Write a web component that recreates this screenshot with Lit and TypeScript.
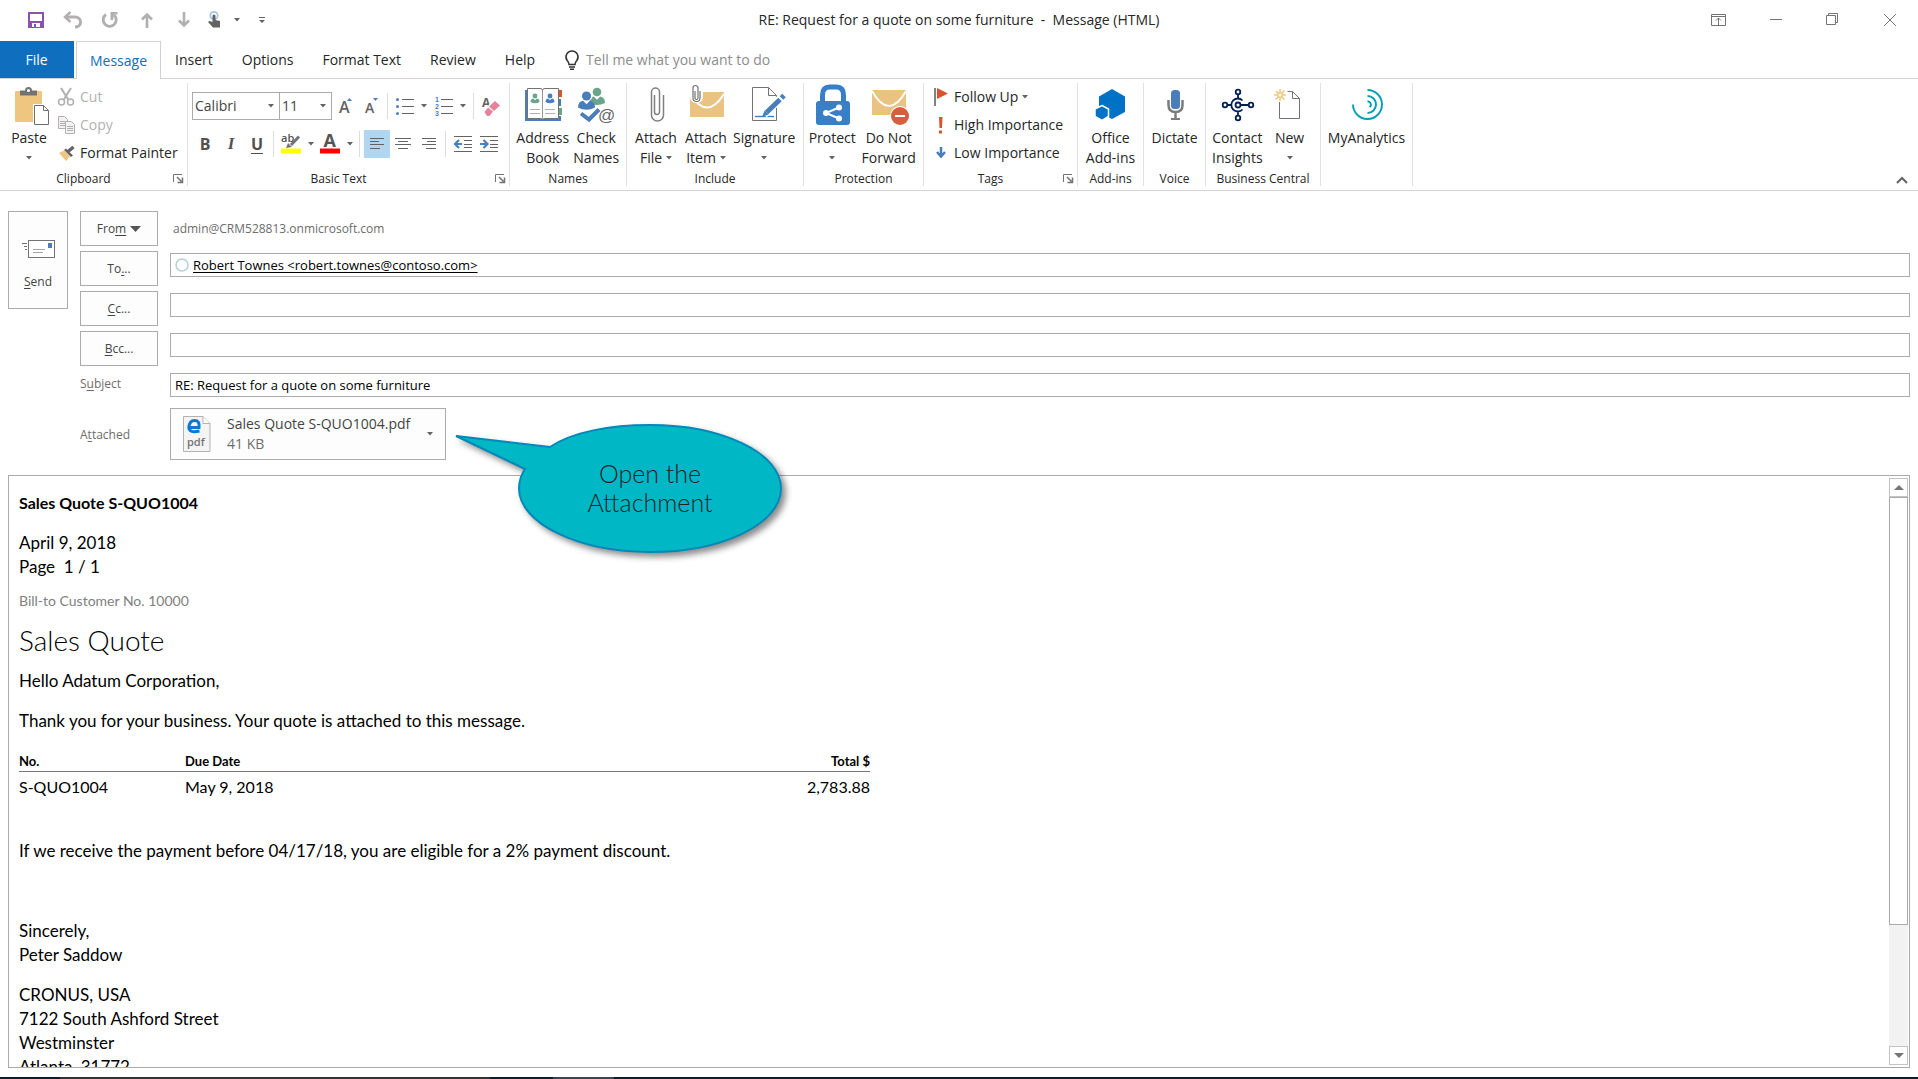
import { LitElement, html, svg, css, nothing, TemplateResult, SVGTemplateResult } from "lit";
import { customElement } from "lit/decorators.js";
import { classMap } from "lit/directives/class-map.js";

type Art = SVGTemplateResult;

const person = (x: number, y: number, w: number, color: string): Art => svg`
  <g fill=${color}>
    <circle cx=${x} cy=${y} r=${w * 0.27}/>
    <path d="M${x - w / 2} ${y + w * 0.68}q0 ${-w * 0.36} ${w * 0.3} ${-w * 0.4}l${w * 0.2} ${w * 0.2}l${w * 0.2} ${-w * 0.2}q${w * 0.3} ${w * 0.04} ${w * 0.3} ${w * 0.4}q${-w / 2} ${w * 0.26} ${-w} 0z"/>
  </g>`;

/* Large ribbon icons, drawn on a 40 x 44 canvas. */
const big: Record<string, Art> = {
  paste: svg`
    <rect x="6" y="8" width="27" height="31" rx="1" fill="#eec680"/>
    <path d="M11 12.500V7.500H16a3.500 3.500 0 0 1 7 0H28v5z" fill="#737373"/>
    <circle cx="19.500" cy="7.500" r="1.500" fill="#fff"/>
    <path d="M24 21h12l5 6v16H24z" fill="#fff"/>
    <path d="M25.500 22.500h9l5 5v14h-14zM34.500 22.500v5h5" fill="#fff" stroke="#6d6d6d"/>`,
  book: svg`
    <rect x="2" y="7" width="36" height="31" fill="#4a7ebb"/>
    <path d="M36 7h3v7h-3z" fill="#d9532c"/><path d="M36 14h3v2h-3zM36 23h3v2h-3zM36 32h3v1h-3z" fill="#fff"/>
    <path d="M36 25h3v7h-3z" fill="#69a58b"/>
    <path d="M4.500 5.500H17q2.500 0 2.500 1.500Q19.500 5.500 22 5.500h13.500V35.500H22q-2.500 0-2.500 1.500q0-1.500-2.500-1.500H4.500z" fill="#fff" stroke="#737373"/>
    <path d="M19.500 7v29" stroke="#999"/>
    ${person(12, 13, 9, "#69a58b")}${person(27, 13, 9, "#4a7ebb")}
    <path d="M7 26.500h10M7 30.500h10M22 26.500h10M22 30.500h10" stroke="#b0b0b0"/>`,
  names: svg`
    ${person(21, 9, 16, "#69a58b")}
    <circle cx="10.500" cy="12.500" r="6" fill="#fff"/><path d="M1 27q1-10 9-10t10 10z" fill="#fff"/>
    ${person(10.5, 13, 17, "#4a7ebb")}
    <path d="M5 30.500l8 6L23 26.500" fill="none" stroke="#fff" stroke-width="7"/>
    <path d="M5 30.500l8 6L23 26.500" fill="none" stroke="#4a7ebb" stroke-width="4"/>
    <text x="22" y="38" font-family="Liberation Sans, sans-serif" font-size="17" fill="#666">@</text>`,
  clip: svg`<path d="M18.500 12V29a2.500 2.500 0 0 0 5 0V9a4 4 0 0 0-8 0V32a6 6 0 0 0 12 0V12" fill="none" stroke="#808080" stroke-width="1.500"/>`,
  item: svg`
    <rect x="4" y="9" width="34" height="25" fill="#eac282"/>
    <path d="M4 11Q21 38 38 11" fill="none" stroke="#fff" stroke-width="2"/>
    <path d="M4 8h13v5q0 7-6.500 7T4 13z" fill="#fff"/>
    <path d="M9 8v7a1.500 1.500 0 0 0 3 0V5a2.500 2.500 0 0 0-5 0V15a3.500 3.500 0 0 0 7 0V8" fill="none" stroke="#737373" stroke-width="1.200"/>`,
  sign: svg`
    <path d="M8.500 4.500H24.500l8 8V37.500H8.500zM24.500 4.500v8h8" fill="#fff" stroke="#737373"/>
    <path d="M11 33.500H30" stroke="#4a7ebb" stroke-width="1.400"/>
    <path d="M20 31.500L40 12" stroke="#fff" stroke-width="8"/>
    <path d="M22.500 29.500L36 16.500M37.500 15l2.500-2.500" stroke="#4a7ebb" stroke-width="5"/>
    <path d="M18 34l2.500-6.500 4 4z" fill="#4a7ebb"/>`,
  lock: svg`
    <path d="M10.500 20V12q0-8 7-8h7q7 0 7 8v8" fill="none" stroke="#387fc8" stroke-width="5"/>
    <rect x="4" y="18" width="34" height="24" rx="3" fill="#387fc8"/>
    <path d="M27 24.500L14 30l13 5.500" fill="none" stroke="#fff" stroke-width="2"/>
    <g fill="#fff"><circle cx="14" cy="30" r="3"/><circle cx="27" cy="24.500" r="3"/><circle cx="27" cy="35.500" r="3"/></g>`,
  noforward: svg`
    <rect x="3" y="7" width="34" height="25" fill="#eac282"/>
    <path d="M3 8Q20 38 37 8" fill="none" stroke="#fff" stroke-width="2"/>
    <circle cx="31" cy="33" r="10" fill="#fff"/><circle cx="31" cy="33" r="9" fill="#d75f41"/>
    <rect x="26" y="32" width="10" height="2" fill="#fff"/>`,
  addins: svg`
    <path d="M21 6l13 7.500V29l-13 7L8 29V13.500z" fill="#0072c6"/>
    <path d="M11 22.500l6.500 3.500v7.500L11 37.500 4 33.500V26z" fill="#0072c6" stroke="#fff" stroke-width="1.500"/>`,
  mic: svg`
    <rect x="16" y="7" width="9" height="19" rx="3.500" fill="#4a7ebb"/>
    <path d="M13.500 17v5q0 7 7 7t7-7v-5M20.500 29v7" fill="none" stroke="#7b7b7b" stroke-width="2.500"/>
    <rect x="16" y="35" width="9" height="2" fill="#7b7b7b"/>`,
  insights: svg`
    <g fill="none" stroke="#002050" stroke-width="1.800">
      <circle cx="21" cy="22" r="2.500"/><circle cx="8" cy="22" r="2.300"/><circle cx="34" cy="22" r="2.300"/>
      <circle cx="21" cy="9" r="2.300"/><circle cx="21" cy="35" r="2.300"/>
      <path d="M25.500 17.500a6.500 6.500 0 1 0 0 9M10 22h4.500M23.500 22H32M21 11v4.500M21 28.500V33"/>
    </g>`,
  fresh: svg`
    <path d="M17.500 8.500H22.500l7 7V35.500H9.500V19M22.500 8.500v7h7" fill="none" stroke="#737373"/>
    <g fill="none" stroke="#eec680" stroke-width="2"><circle cx="10" cy="12" r="2.300" stroke-width="1.500"/>
    <path d="M10 6v3.500M10 14.500V18M4 12h3.500M12.500 12H16M6 8l2 2M12 14l2.500 2.500M14.500 7.500l-2.500 2.500M8 14l-2.500 2.500" stroke-width="1.500"/></g>`,
  analytics: svg`
    <g fill="none" stroke="#00a0b4" stroke-width="1.900">
      <path d="M6 21.500a14.500 14.500 0 1 0 14.500-14.500"/><path d="M20.500 13a8.500 8.500 0 0 1 0 17"/><path d="M20.500 18.500a3 3 0 0 1 2 5.500"/>
    </g>`,
};

/* Small icons, each with its own canvas size. */
const small: Record<string, [number, number, Art]> = {
  save: [16, 16, svg`<path d="M0 0h16v16H0z" fill="#8a52ad"/><path d="M2 2h12v7H2z" fill="#fff"/><path d="M4 11h8v4H4z" fill="#fff"/><path d="M6 12h2v3H6z" fill="#8a52ad"/>`],
  undo: [20, 16, svg`<path d="M3 5h9a5 4.500 0 0 1 0 10" fill="none" stroke="#b1afb0" stroke-width="3"/><path d="M7.500 0L2 5l5.500 5" fill="none" stroke="#b1afb0" stroke-width="2.500"/>`],
  redo: [18, 16, svg`<path d="M5 2.500A6.500 6.500 0 1 0 13 3" fill="none" stroke="#b1afb0" stroke-width="2.800"/><path d="M9.500 0h7v2.500h-3.500L12 8H9.500z" fill="#b1afb0"/>`],
  up: [12, 16, svg`<path d="M6 16V2M1 7.500l5-5 5 5" fill="none" stroke="#b1afb0" stroke-width="2.600"/>`],
  down: [12, 16, svg`<path d="M6 0v14M1 8.500l5 5 5-5" fill="none" stroke="#b1afb0" stroke-width="2.600"/>`],
  touch: [14, 17, svg`<circle cx="6" cy="4.500" r="3.700" fill="none" stroke="#a5c6e4" stroke-width="1.800"/><path d="M4.500 4.500q1.500-2 3 0V9l4.500 1v6.500H5L0 11l1.500-1 3 1z" fill="#636363"/>`],
  caret: [6, 4, svg`<path d="M0 0h6L3 3.500z" fill="#636363"/>`],
  more: [6, 6, svg`<path d="M0 0h6v1H0zM0 3h6L3 6z" fill="#636363"/>`],
  pin: [16, 14, svg`<path d="M.5 1.500h14v11H.5zM.5 3.500h14M7.500 12V5M5 7.500L7.500 5 10 7.500" fill="none" stroke="#737373"/>`],
  min: [12, 12, svg`<path d="M0 5.500h12" stroke="#737373"/>`],
  restore: [13, 13, svg`<path d="M.5 2.500h9v9h-9zM2.500 2.500v-2h9v9h-2" fill="none" stroke="#737373"/>`],
  close: [12, 12, svg`<path d="M0 0l12 12M12 0L0 12" stroke="#737373"/>`],
  bulb: [16, 20, svg`<path d="M5 14.500q0-2-1.800-4A6 6 0 0 1 8 .9a6 6 0 0 1 4.800 9.600Q11 12.500 11 14.500z" fill="none" stroke="#333" stroke-width="1.500"/><path d="M5 17h6M6 19.200h4" stroke="#333" stroke-width="1.500"/>`],
  cut: [16, 18, svg`<g fill="none" stroke="#b1afb0"><path d="M3 0l7.500 12M13 0L5.500 12" stroke-width="2"/><circle cx="3.500" cy="14" r="3" stroke-width="1.500"/><circle cx="12.500" cy="14" r="3" stroke-width="1.500"/></g>`],
  copy: [17, 18, svg`<g fill="#f5f2f5" stroke="#b1afb0"><path d="M.5.500h6l3 3v9h-9z"/><path d="M2 5.500h5M2 7.500h5M2 9.500h5"/><path d="M7.500 5.500h6l3 3v9h-9z"/><path d="M9 10.500h6M9 12.500h6M9 14.500h6"/></g>`],
  brush: [17, 15, svg`<path d="M1 7l5-2.500 6 6L8 15z" fill="#eec680"/><path d="M6 4l2-1.500 7 7-2 1.500z" fill="#636363"/><path d="M10 5.500L15.500 1" stroke="#636363" stroke-width="3.500"/>`],
  bullets: [18, 17, svg`<g fill="#4a7ebb"><circle cx="1.500" cy="1.500" r="1.500"/><circle cx="1.500" cy="8.500" r="1.500"/><circle cx="1.500" cy="15.500" r="1.500"/></g><path d="M6 1.500h12M6 8.500h12M6 15.500h12" stroke="#636363"/>`],
  numbers: [18, 19, svg`<g font-family="Liberation Sans, sans-serif" font-weight="700" font-size="7" fill="#4a7ebb"><text x="0" y="5">1</text><text x="0" y="12">2</text><text x="0" y="19">3</text></g><path d="M6 2.500h12M6 9.500h12M6 16.500h12" stroke="#636363"/>`],
  eraser: [18, 19, svg`<text x="0" y="10" font-family="Open Sans, sans-serif" font-weight="700" font-size="12" fill="#636363">A</text><path d="M1.500 13.500l9-9.500 8 6-8 9.500H5z" fill="#fff"/><path d="M7 9.500l6-5.500 5 4.500-6 5.500z" fill="#e6829a"/><path d="M6 10.500l5 4-3.500 4.500H5L2.500 15z" fill="#e6829a"/>`],
  mark: [20, 20, svg`<text x="0" y="8" font-family="Open Sans, sans-serif" font-weight="600" font-size="11" fill="#555">ab</text><path d="M18 2.500L10 11" stroke="#737373" stroke-width="3"/><path d="M5 14l2-5 4 4z" fill="#737373"/><path d="M0 14.500h20v5H0z" fill="#ff0"/>`],
  tint: [20, 20, svg`<text x="3.500" y="13" font-family="Open Sans, sans-serif" font-weight="700" font-size="18" fill="#555">A</text><path d="M0 14.500h20v5H0z" fill="red"/>`],
  left: [14, 12, svg`<path d="M0 .5h14M0 3.500h9M0 6.500h14M0 10.500h10" stroke="#636363"/>`],
  center: [16, 12, svg`<path d="M0 .5h16M3 3.500h10M0 6.500h16M3 10.500h10" stroke="#636363"/>`],
  right: [14, 12, svg`<path d="M0 .5h14M5 3.500h9M0 6.500h14M4 10.500h10" stroke="#636363"/>`],
  outdent: [18, 16, svg`<path d="M0 .5h18M10 4.500h8M10 8.500h8M10 11.500h8M0 15.500h18" stroke="#636363"/><path d="M8 8H2M5 4L1 8l4 4" fill="none" stroke="#4a7ebb" stroke-width="2.200"/>`],
  indent: [18, 16, svg`<path d="M0 .5h18M10 4.500h8M10 8.500h8M10 11.500h8M0 15.500h18" stroke="#636363"/><path d="M0 8h6M3.500 4l4 4-4 4" fill="none" stroke="#4a7ebb" stroke-width="2.200"/>`],
  grow: [13, 16, svg`<text x="0" y="15" font-family="Open Sans, sans-serif" font-weight="600" font-size="16" fill="#636363">A</text><path d="M8 3l2.500-3L13 3z" fill="#4a7ebb"/>`],
  shrink: [13, 16, svg`<text x="0" y="15" font-family="Open Sans, sans-serif" font-weight="600" font-size="14" fill="#636363">A</text><path d="M8 0h5l-2.500 3z" fill="#4a7ebb"/>`],
  flag: [14, 18, svg`<path d="M1 0v18" stroke="#636363" stroke-width="1.600"/><path d="M3 0l11 5.500L3 11z" fill="#d9532c"/>`],
  high: [14, 17, svg`<path d="M5 0h3.500L8 11H5.500zM5 13.500h3v3H5z" fill="#d9532c"/>`],
  low: [14, 14, svg`<path d="M7 1v10M3 6l4 4.500L11 6" fill="none" stroke="#4a7ebb" stroke-width="2.500"/>`],
  launch: [10, 9, svg`<path d="M.5 8V.5H9" fill="none" stroke="#737373"/><path d="M4 3l4.500 4.500M9.500 3.500V8.500H4.500" fill="none" stroke="#737373" stroke-width="1.500"/>`],
  chevron: [12, 8, svg`<path d="M1 7l5-5 5 5" fill="none" stroke="#636363" stroke-width="2"/>`],
  send: [33, 18, svg`<path d="M0 3.500h5M2 6.500h3M3 9.500h2" stroke="#737373"/><rect x="6.500" y=".5" width="26" height="17" fill="#fff" stroke="#737373"/><path d="M26 3h4v5h-4z" fill="#4a7ebb"/><path d="M11 9.500h12M11 12.500h10" stroke="#a5a5a5"/>`],
  wedge: [11, 6, svg`<path d="M0 0h11L5.500 6z" fill="#555"/>`],
  ring: [14, 14, svg`<circle cx="7" cy="7" r="6" fill="none" stroke="#b4d0d8" stroke-width="1.500"/>`],
  file: [28, 36, svg`<path d="M.5.500H20l7 7V35.500H.5z" fill="#f4f4f4" stroke="#b3b3b3"/><path d="M20 .5v7h7" fill="#fff" stroke="#b3b3b3"/>
    <path d="M5.500 11.500h10.500Q17 4.500 11.500 4.500Q6.500 4.500 5.800 11.500Q6.500 17.500 16.500 15" fill="none" stroke="#0a78d7" stroke-width="3"/>
    <text x="4" y="30" font-family="Open Sans, sans-serif" font-weight="600" font-size="11" fill="#737373">pdf</text>`],
  tri: [10, 5, svg`<path d="M0 5l5-5 5 5z" fill="#777"/>`],
  tridown: [10, 5, svg`<path d="M0 0h10L5 5z" fill="#777"/>`],
};

const icon = (name: string): TemplateResult => {
  const [w, h, art] = small[name];
  return html`<svg class="icon" width=${w} height=${h} viewBox="0 0 ${w} ${h}" aria-hidden="true">${art}</svg>`;
};
const bigIcon = (name: string) =>
  html`<svg class="icon" width="40" height="44" viewBox="0 0 40 44" aria-hidden="true">${big[name]}</svg>`;

const bigButton = (name: string, line1: string, line2 = "", caret = false) => html`
  <button class="big">
    ${bigIcon(name)}
    <span class="line">${line1}</span>
    <span class="line">${line2}${caret ? icon("caret") : nothing}</span>
  </button>`;

const rowButton = (name: string, label: string, opts: { off?: boolean; caret?: boolean } = {}) => html`
  <button class=${classMap({ row: true, off: !!opts.off })}>
    <span class="slot">${icon(name)}</span>${label}${opts.caret ? icon("caret") : nothing}
  </button>`;

const tool = (name: string, label: string, caret = false, on = false) => html`
  <button class=${classMap({ tool: true, wide: caret, on })} aria-label=${label}>
    ${icon(name)}${caret ? icon("caret") : nothing}
  </button>`;

const group = (kind: string, label: string, content: TemplateResult, launcher = false) => html`
  <section class="group ${kind}">
    <div class="tools">${content}</div>
    <footer class="caption">
      <span>${label}</span>
      ${launcher ? html`<button class="launcher" aria-label="${label} options">${icon("launch")}</button>` : nothing}
    </footer>
  </section>`;

@customElement("app-root")
export class AppRoot extends LitElement {
  static styles = css`
    :host {
      display: flex;
      flex-direction: column;
      height: 100vh;
      position: relative;
      overflow: hidden;
      background: #fff;
      color: #262626;
      font: 14px/20px "Open Sans", "Noto Sans", sans-serif;
    }
    *, *::before { box-sizing: border-box; }
    button, input, select { font: inherit; color: inherit; background: none; border: 0; padding: 0; margin: 0; border-radius: 0; }
    .icon { display: block; flex: none; overflow: visible; }

    .titlebar { display: grid; grid-template-columns: 1fr auto 1fr; height: 41px; padding-bottom: 2px; flex: none; align-items: center; }
    .quick { display: flex; align-items: center; padding-left: 17px; }
    .quick button { display: flex; align-items: center; justify-content: center; width: 37px; height: 32px; }
    .quick .touch { width: 44px; gap: 12px; }
    .quick .more { width: 32px; }
    .title { margin: 0; font-size: 14px; font-weight: 400; white-space: pre; }
    .window { display: flex; justify-content: flex-end; }
    .window button { display: flex; align-items: center; justify-content: center; width: 57px; height: 38px; }

    .tabs { display: flex; height: 38px; flex: none; align-items: stretch; border-bottom: 1px solid #d2d2d2; }
    .tabs button { padding: 0 15px 0 14px; }
    .tabs .file { width: 74px; background: #106ebe; color: #fff; margin-right: 2px; }
    .tabs .active { width: 85px; padding: 0; color: #106ebe; background: #fff; border: 1px solid #d2d2d2; border-bottom: 0; margin-bottom: -1px; }
    .tell { display: flex; align-items: center; gap: 6px; margin-left: 14px; }
    .tell input { width: 240px; outline: 0; }
    .tell input::placeholder { color: #8c8c8c; opacity: 1; }

    .ribbon { display: flex; height: 112px; flex: none; padding: 4px 0; border-bottom: 1px solid #d2d2d2; }
    .group { display: flex; flex-direction: column; border-right: 1px solid #e1e1e1; flex: none; }
    .tools { display: flex; height: 88px; justify-content: center; }
    .caption { display: flex; height: 15px; margin-top: 1px; font-size: 12px; line-height: 15px; align-items: center; }
    .caption span { flex: 1; text-align: center; white-space: nowrap; }
    .launcher { width: 20px; padding-left: 6px; }
    .clipboard { width: 188px; } .basic { width: 322px; } .names { width: 117px; }
    .include { width: 177px; } .protection { width: 120px; } .tags { width: 154px; }
    .addins { width: 66px; } .voice { width: 62px; } .central { width: 115px; } .analytics { width: 92px; }
    .big { display: flex; flex-direction: column; align-items: center; min-width: 50px; padding: 0 2px; flex: none; }
    .big .icon { margin-bottom: 1px; }
    .clipboard .big { width: 58px; }
    .names .tools { padding: 0 3px 0 6px; }
    .protection .tools { padding-right: 6px; }
    .names .big, .protection .big { flex: 1 1 0; }
    .include .tools, .central .tools { justify-content: flex-start; padding-left: 4px; }
    .line { display: flex; align-items: center; gap: 4px; height: 20px; white-space: nowrap; }
    .rows { display: flex; flex-direction: column; flex: 1; }
    .row { display: flex; align-items: center; height: 28px; white-space: nowrap; }
    .row .slot { width: 22px; }
    .row > .icon { margin-left: 4px; }
    .off { color: #b1b1b1; }
    .tags .rows { padding-left: 10px; }
    .tags .slot { width: 20px; }

    .basic .tools { flex-direction: column; justify-content: flex-start; padding: 8px 3px 0 4px; gap: 8px; }
    .strip { display: flex; align-items: center; height: 30px; }
    .combo { display: grid; align-items: center; height: 28px; border: 1px solid #ababab; color: #444; }
    .combo select { grid-area: 1 / 1; appearance: none; height: 26px; padding-left: 2px; outline: 0; }
    .combo .icon { grid-area: 1 / 1; justify-self: end; margin-right: 5px; pointer-events: none; }
    .face { width: 88px; } .size { width: 53px; margin-left: -1px; }
    .tool { display: flex; align-items: center; justify-content: center; width: 26px; height: 28px; }
    .wide { width: 39px; gap: 7px; }
    .on { background: #b1d6f2; }
    .bar { width: 1px; height: 26px; margin: 0 4px 0 3px; background: #dcdcdc; }
    .letter { font: 700 16px/28px "Open Sans", sans-serif; color: #505050; }
    .italic { font: italic 700 17px/28px "Liberation Serif", serif; }
    .under { text-decoration: underline; text-decoration-thickness: 1px; text-underline-offset: 3px; }
    .collapse { margin: auto 10px 2px auto; }

    .compose { display: grid; grid-template-columns: 60px 78px 1fr; column-gap: 12px; padding: 20px 8px 0; flex: none; color: #444; font-size: 12px; }
    .send { grid-row: 1 / span 6; height: 98px; padding-top: 12px; border: 1px solid #ababab; background: #fdfdfd; display: flex; flex-direction: column; align-items: center; justify-content: center; gap: 14px; }
    .field { display: grid; grid-template-columns: subgrid; grid-column: 2 / 4; height: 40px; align-items: start; }
    .pick { height: 35px; padding-top: 1px; border: 1px solid #ababab; background: #fdfdfd; display: flex; align-items: center; justify-content: center; gap: 4px; }
    .box { display: flex; align-items: center; gap: 4px; height: 24px; margin-top: 2px; border: 1px solid #ababab; padding: 0 4px; color: #000; font-size: 13px; }
    .box input { flex: 1; outline: 0; height: 22px; min-width: 0; }
    .who input { text-decoration: underline; text-underline-offset: 2px; }
    .from { padding-left: 3px; color: #6d6d6d; line-height: 35px; }
    .name { color: #6d6d6d; line-height: 26px; }
    .subject-field { height: 37px; }
    .attach { height: 63px; }
    .attach .name { line-height: 54px; }
    .card { display: flex; align-items: center; width: 276px; height: 52px; padding: 0 12px; border: 1px solid #ababab; background: #fdfdfd; font-size: 14px; text-align: left; }
    .card .text { display: grid; margin: 0 auto 0 16px; }
    .card .weight { color: #6d6d6d; }
    u { text-underline-offset: 2px; }

    .message { flex: 1; min-height: 0; display: flex; margin: 4px 8px 9px; border: 1px solid #ababab; }
    .scroll { flex: 1; overflow: hidden; padding: 15px 10px 0; color: #000; font: 17px/24px Lato, "Open Sans", sans-serif; }
    .scroll p { margin: 0 0 16px; white-space: pre-wrap; }
    .scroll .subject { font-size: 16px; font-weight: 700; }
    .scroll .bill { color: #808080; font-size: 14px; margin: -6px 0 7px; }
    .scroll h1 { margin: 0 0 9px; font-size: 28px; line-height: 40px; font-weight: 300; }
    .quote { width: 851px; max-width: 100%; margin: 0 0 40px; border-collapse: collapse; table-layout: fixed; font-size: 16px; }
    .quote th { font-size: 13px; line-height: 20px; padding: 2px 0 0; text-align: left; border-bottom: 1px solid #777; }
    .quote td { padding: 3px 0 0; }
    .quote .no { width: 166px; }
    .quote .amount { text-align: right; }
    .scroll .terms { margin-bottom: 56px; }
    .bar-v { display: flex; flex-direction: column; width: 19px; margin: 2px 1px; background: #f2f2f2; }
    .bar-v button { display: flex; align-items: center; justify-content: center; height: 19px; flex: none; border: 1px solid #c3c3c3; background: #fff; }
    .track { flex: 1; }
    .thumb { height: 78%; border: 1px solid #ababab; background: #fff; }
    .taskbar { height: 2px; flex: none; background: linear-gradient(90deg, #0b1d2c 60px, #333 60px 490px, #0b1d2c 490px 553px, #3a4550 553px 614px, #0b1d2c 614px); }

    .callout { position: absolute; left: 450px; top: 418px; width: 340px; height: 144px; display: grid; color: #222; }
    .callout svg { grid-area: 1 / 1; filter: drop-shadow(4px 4px 3px rgba(0, 0, 0, 0.45)); overflow: visible; }
    .callout p { grid-area: 1 / 1; z-index: 1; margin: 41px 0 0 60px; text-align: center; font: 300 25px/29px Lato, sans-serif; }
  `;

  render() {
    return html`
      <header class="titlebar">
        <div class="quick">
          <button aria-label="Save">${icon("save")}</button>
          <button aria-label="Undo">${icon("undo")}</button>
          <button aria-label="Redo">${icon("redo")}</button>
          <button aria-label="Previous">${icon("up")}</button>
          <button aria-label="Next">${icon("down")}</button>
          <button class="touch" aria-label="Touch mode">${icon("touch")}${icon("caret")}</button>
          <button class="more" aria-label="Customize toolbar">${icon("more")}</button>
        </div>
        <h2 class="title">RE: Request for a quote on some furniture  -  Message (HTML)</h2>
        <div class="window">
          <button aria-label="Ribbon display">${icon("pin")}</button>
          <button aria-label="Minimize">${icon("min")}</button>
          <button aria-label="Restore">${icon("restore")}</button>
          <button aria-label="Close">${icon("close")}</button>
        </div>
      </header>

      <nav class="tabs">
        <button class="file">File</button>
        <button class="active">Message</button>
        ${["Insert", "Options", "Format Text", "Review", "Help"].map((t) => html`<button>${t}</button>`)}
        <label class="tell">${icon("bulb")}<input type="text" aria-label="Tell me" placeholder="Tell me what you want to do" /></label>
      </nav>

      <div class="ribbon">
        ${group("clipboard", "Clipboard", html`
          ${bigButton("paste", "Paste", "", true)}
          <div class="rows">
            ${rowButton("cut", "Cut", { off: true })}
            ${rowButton("copy", "Copy", { off: true })}
            ${rowButton("brush", "Format Painter")}
          </div>`, true)}
        ${group("basic", "Basic Text", html`
          <div class="strip">
            <span class="combo face"><select aria-label="Font"><option>Calibri</option></select>${icon("caret")}</span>
            <span class="combo size"><select aria-label="Font size"><option>11</option></select>${icon("caret")}</span>
            ${tool("grow", "Grow font")}${tool("shrink", "Shrink font")}
            <span class="bar"></span>
            ${tool("bullets", "Bullets", true)}${tool("numbers", "Numbering", true)}
            <span class="bar"></span>
            ${tool("eraser", "Clear formatting")}
          </div>
          <div class="strip">
            <button class="tool letter">B</button>
            <button class="tool letter italic">I</button>
            <button class="tool letter under">U</button>
            <span class="bar"></span>
            ${tool("mark", "Highlight", true)}${tool("tint", "Font color", true)}
            <span class="bar"></span>
            ${tool("left", "Align left", false, true)}${tool("center", "Center")}${tool("right", "Align right")}
            <span class="bar"></span>
            ${tool("outdent", "Decrease indent")}${tool("indent", "Increase indent")}
          </div>`, true)}
        ${group("names", "Names", html`${bigButton("book", "Address", "Book")}${bigButton("names", "Check", "Names")}`)}
        ${group("include", "Include", html`
          ${bigButton("clip", "Attach", "File", true)}${bigButton("item", "Attach", "Item", true)}${bigButton("sign", "Signature", "", true)}`)}
        ${group("protection", "Protection", html`${bigButton("lock", "Protect", "", true)}${bigButton("noforward", "Do Not", "Forward")}`)}
        ${group("tags", "Tags", html`
          <div class="rows">
            ${rowButton("flag", "Follow Up", { caret: true })}
            ${rowButton("high", "High Importance")}
            ${rowButton("low", "Low Importance")}
          </div>`, true)}
        ${group("addins", "Add-ins", bigButton("addins", "Office", "Add-ins"))}
        ${group("voice", "Voice", bigButton("mic", "Dictate"))}
        ${group("central", "Business Central", html`${bigButton("insights", "Contact", "Insights")}${bigButton("fresh", "New", "", true)}`)}
        ${group("analytics", "", bigButton("analytics", "MyAnalytics"))}
        <button class="collapse" aria-label="Collapse ribbon">${icon("chevron")}</button>
      </div>

      <form class="compose" @submit=${(e: Event) => e.preventDefault()}>
        <button class="send" type="button">${icon("send")}<span><u>S</u>end</span></button>
        <div class="field">
          <button class="pick" type="button"><span>Fro<u>m</u></span>${icon("wedge")}</button>
          <span class="from">admin@CRM528813.onmicrosoft.com</span>
        </div>
        <div class="field">
          <button class="pick" type="button"><span>To<u>.</u>..</span></button>
          <span class="box who">${icon("ring")}<input type="text" aria-label="To" .value=${"Robert Townes <robert.townes@contoso.com>"} /></span>
        </div>
        <div class="field">
          <button class="pick" type="button"><span><u>C</u>c...</span></button>
          <span class="box"><input type="text" aria-label="Cc" /></span>
        </div>
        <div class="field">
          <button class="pick" type="button"><span><u>B</u>cc...</span></button>
          <span class="box"><input type="text" aria-label="Bcc" /></span>
        </div>
        <div class="field subject-field">
          <label class="name" for="subject">S<u>u</u>bject</label>
          <span class="box"><input id="subject" type="text" .value=${"RE: Request for a quote on some furniture"} /></span>
        </div>
        <div class="field attach">
          <span class="name">A<u>t</u>tached</span>
          <button class="card" type="button">
            ${icon("file")}
            <span class="text"><span>Sales Quote S-QUO1004.pdf</span><span class="weight">41 KB</span></span>
            ${icon("caret")}
          </button>
        </div>
      </form>

      <main class="message">
        <article class="scroll">
          <p class="subject">Sales Quote S-QUO1004</p>
          <p>April 9, 2018<br />Page  1 / 1</p>
          <p class="bill">Bill-to Customer No. 10000</p>
          <h1>Sales Quote</h1>
          <p>Hello Adatum Corporation,</p>
          <p>Thank you for your business. Your quote is attached to this message.</p>
          <table class="quote">
            <thead><tr><th class="no">No.</th><th>Due Date</th><th class="amount">Total $</th></tr></thead>
            <tbody><tr><td>S-QUO1004</td><td>May 9, 2018</td><td class="amount">2,783.88</td></tr></tbody>
          </table>
          <p class="terms">If we receive the payment before 04/17/18, you are eligible for a 2% payment discount.</p>
          <p>Sincerely,<br />Peter Saddow</p>
          <p>CRONUS, USA<br />7122 South Ashford Street<br />Westminster<br />Atlanta, 31772</p>
        </article>
        <div class="bar-v">
          <button aria-label="Scroll up">${icon("tri")}</button>
          <div class="track"><div class="thumb"></div></div>
          <button aria-label="Scroll down">${icon("tridown")}</button>
        </div>
      </main>
      <div class="taskbar"></div>

      <aside class="callout">
        <svg width="340" height="144" viewBox="0 0 340 144" aria-hidden="true">
          <path d="M6 18L100 29C122 14 160 7 200 7C272 7 331 35 331 70.500S272 134 200 134S69 105 69 70.500Q69 60 75 51Z" fill="#00b7c6" stroke="#0088b8" stroke-width="2"/>
        </svg>
        <p>Open the<br />Attachment</p>
      </aside>
    `;
  }
}
